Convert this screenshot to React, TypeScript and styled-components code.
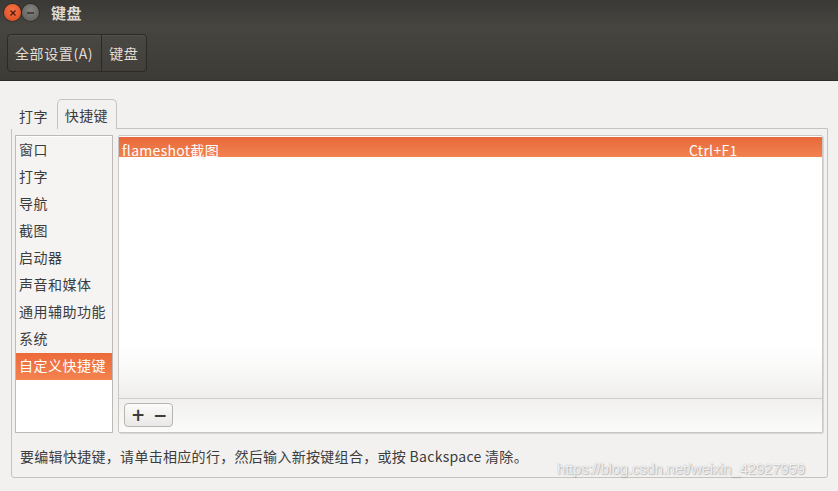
import React, { useState } from 'react';
import styled, { createGlobalStyle } from 'styled-components';

const GlobalStyle = createGlobalStyle`
  html, body {
    margin: 0;
    padding: 0;
    background: #f2f1f0;
  }
  body {
    font-family: "Noto Sans CJK SC", "Noto Sans", sans-serif;
    font-size: 14px;
    color: #3c3c3c;
  }
`;

const Window = styled.div`
  width: 838px;
  height: 491px;
  display: flex;
  flex-direction: column;
  position: relative;
  overflow: hidden;
`;

const TitleBar = styled.div`
  height: 25px;
  display: flex;
  align-items: center;
  padding-left: 4px;
  background: linear-gradient(#3a3935, #46443f);
`;

const WinButton = styled.div<{ kind: 'close' | 'min' }>`
  width: 17px;
  height: 17px;
  border-radius: 50%;
  display: flex;
  align-items: center;
  justify-content: center;
  margin-right: 1px;
  background: ${({ kind }) =>
    kind === 'close'
      ? 'radial-gradient(circle at 50% 35%, #f57245, #d9481d)'
      : 'radial-gradient(circle at 50% 35%, #85837e, #5d5b57)'};
  box-shadow: 0 0 0 1px rgba(0, 0, 0, 0.25);
`;

const Title = styled.span`
  margin-left: 11px;
  color: #dfdbd2;
  font-weight: bold;
  font-size: 15px;
  letter-spacing: 0.5px;
`;

const Toolbar = styled.div`
  height: 56px;
  box-sizing: border-box;
  padding: 9px 7px 8px;
  background: linear-gradient(#47453f, #3d3b36);
  border-bottom: 1px solid #2d2c28;
  display: flex;
`;

const PathBar = styled.div`
  display: flex;
  border: 1px solid #2b2a26;
  border-radius: 4px;
  background: linear-gradient(#4a4843, #423f3a);
  box-shadow: inset 0 1px 0 rgba(255, 255, 255, 0.06);
`;

const PathButton = styled.div<{ last?: boolean }>`
  display: flex;
  align-items: center;
  padding: 0 8px 0 7px;
  color: #e2ded6;
  font-size: 14px;
  letter-spacing: 0.6px;
  border-right: ${({ last }) => (last ? 'none' : '1px solid #2b2a26')};
`;

const Content = styled.div`
  flex: 1;
  padding: 16px 10px 13px 11px;
  display: flex;
  flex-direction: column;
`;

const TabStrip = styled.div`
  display: flex;
  align-items: flex-end;
  height: 31px;
`;

const Tab = styled.div<{ active?: boolean }>`
  height: ${({ active }) => (active ? '30px' : '28px')};
  box-sizing: border-box;
  padding: 0 8px 0 7px;
  display: flex;
  align-items: center;
  font-size: 14px;
  letter-spacing: 0.4px;
  color: #3c3c3c;
  border: 1px solid ${({ active }) => (active ? '#c6c3be' : 'transparent')};
  border-bottom: none;
  border-radius: 5px 5px 0 0;
  background: #f2f1f0;
  margin-bottom: -1px;
  position: relative;
  z-index: 1;
`;

const Panel = styled.div`
  flex: 1;
  border: 1px solid #c6c3be;
  border-radius: 0 0 3px 3px;
  padding: 6px 4px 0 3px;
  display: flex;
  flex-direction: column;
`;

const Body = styled.div`
  display: flex;
  gap: 5px;
  height: 298px;
`;

const CategoryList = styled.div`
  width: 98px;
  box-sizing: border-box;
  border: 1px solid #bdbab5;
  background: #fff;
  padding-top: 1px;
`;

const Category = styled.div<{ selected?: boolean }>`
  height: 27px;
  padding: 0 0 3px 3px;
  box-sizing: border-box;
  display: flex;
  align-items: center;
  font-size: 14px;
  letter-spacing: 0.5px;
  white-space: nowrap;
  overflow: hidden;
  color: ${({ selected }) => (selected ? '#fff' : '#3c3c3c')};
  background: ${({ selected }) =>
    selected ? 'linear-gradient(#ec6a3b, #f3834f)' : '#f5f4f3'};
`;

const Shortcuts = styled.div`
  flex: 1;
  display: flex;
  flex-direction: column;
  border: 1px solid #c9c7c3;
  border-radius: 2px;
  box-shadow: 1px 1px 0 #d9d7d3;
`;

const Tree = styled.div`
  flex: 1;
  background: linear-gradient(#ffffff 0%, #ffffff 80%, #f9f9f8 89%, #efeeed 100%);
  border-bottom: 1px solid #cfcdc9;
`;

const ShortcutRow = styled.div<{ selected?: boolean }>`
  height: 20px;
  margin-top: 1px;
  display: flex;
  overflow: hidden;
  font-size: 14px;
  line-height: 20px;
  padding-top: 3px;
  box-sizing: border-box;
  color: ${({ selected }) => (selected ? '#fff' : '#3c3c3c')};
  background: ${({ selected }) =>
    selected ? 'linear-gradient(#e8683a, #f28250)' : 'transparent'};
`;

const RowName = styled.span`
  width: 567px;
  padding-left: 3px;
  letter-spacing: 0.3px;
`;

const RowKey = styled.span`
  flex: 1;
  letter-spacing: 0.3px;
`;

const TreeToolbar = styled.div`
  height: 33px;
  box-sizing: border-box;
  padding: 4px 5px;
  background: linear-gradient(#f1f0ef, #fbfbfa);
  display: flex;
  align-items: flex-start;
`;

const ButtonGroup = styled.div`
  display: flex;
  border: 1px solid #b8b5b0;
  border-radius: 4px;
  background: linear-gradient(#fbfbfa, #e9e8e6);
  height: 22px;
  padding: 0 2px 0 3px;
  gap: 2px;
`;

const SmallButton = styled.button`
  border: none;
  background: transparent;
  width: 20px;
  padding: 0;
  font-size: 17px;
  font-weight: bold;
  line-height: 20px;
  color: #3c3c3c;
  font-family: "DejaVu Sans", sans-serif;
`;

const Hint = styled.div`
  padding: 13px 0 0 5px;
  font-size: 14px;
  letter-spacing: 0.3px;
  color: #3c3c3c;
  white-space: nowrap;
`;

const Watermark = styled.div`
  position: absolute;
  left: 557px;
  top: 460px;
  font-family: "Liberation Sans", Arial, sans-serif;
  font-size: 15px;
  letter-spacing: -0.2px;
  color: rgba(255, 255, 255, 0.85);
  text-shadow: 0 0 1px rgba(120, 120, 120, 0.6), 1px 1px 1px rgba(150, 150, 150, 0.5);
  white-space: nowrap;
  pointer-events: none;
`;

const categories = [
  '窗口',
  '打字',
  '导航',
  '截图',
  '启动器',
  '声音和媒体',
  '通用辅助功能',
  '系统',
  '自定义快捷键',
];

const App: React.FC = () => {
  const [selected, setSelected] = useState(8);
  const [tab, setTab] = useState(1);

  return (
    <Window>
      <GlobalStyle />
      <TitleBar>
        <WinButton kind="close">
          <svg width="8" height="8" viewBox="0 0 8 8">
            <path d="M1.5 1.5L6.5 6.5M6.5 1.5L1.5 6.5" stroke="#4a1a0a" strokeWidth="1.3" />
          </svg>
        </WinButton>
        <WinButton kind="min">
          <svg width="9" height="8" viewBox="0 0 9 8">
            <path d="M1 4H8" stroke="#2f2e2b" strokeWidth="1.4" />
          </svg>
        </WinButton>
        <Title>键盘</Title>
      </TitleBar>
      <Toolbar>
        <PathBar>
          <PathButton>全部设置(A)</PathButton>
          <PathButton last>键盘</PathButton>
        </PathBar>
      </Toolbar>
      <Content>
        <TabStrip>
          <Tab active={tab === 0} onClick={() => setTab(0)}>打字</Tab>
          <Tab active={tab === 1} onClick={() => setTab(1)}>快捷键</Tab>
        </TabStrip>
        <Panel>
          <Body>
            <CategoryList>
              {categories.map((c, i) => (
                <Category key={c} selected={i === selected} onClick={() => setSelected(i)}>
                  {c}
                </Category>
              ))}
            </CategoryList>
            <Shortcuts>
              <Tree>
                <ShortcutRow selected>
                  <RowName>flameshot截图</RowName>
                  <RowKey>Ctrl+F1</RowKey>
                </ShortcutRow>
              </Tree>
              <TreeToolbar>
                <ButtonGroup>
                  <SmallButton>+</SmallButton>
                  <SmallButton>−</SmallButton>
                </ButtonGroup>
              </TreeToolbar>
            </Shortcuts>
          </Body>
          <Hint>要编辑快捷键，请单击相应的行，然后输入新按键组合，或按 Backspace 清除。</Hint>
        </Panel>
      </Content>
      <Watermark>https://blog.csdn.net/weixin_42927959</Watermark>
    </Window>
  );
};

export default App;
